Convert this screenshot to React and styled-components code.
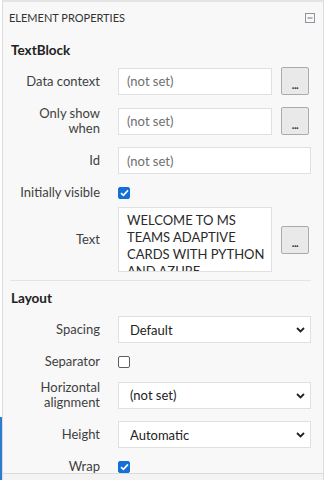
import React from "react";
import styled, { createGlobalStyle } from "styled-components";

const Global = createGlobalStyle`
  html, body { margin: 0; padding: 0; background: #ffffff; }
  body { font-family: Lato, "Segoe UI", "Liberation Sans", sans-serif; }
  * { box-sizing: border-box; }
`;

const Page = styled.div`
  display: flex;
  width: 327px;
  height: 480px;
  overflow: hidden;
  background: #ffffff;
`;

const Rail = styled.div`
  width: 2px;
  display: flex;
  flex-direction: column;
  justify-content: flex-end;
`;

const RailMark = styled.div`
  height: 63px;
  background: #2b7bd0;
`;

const Panel = styled.div`
  width: 322px;
  height: 480px;
  display: flex;
  flex-direction: column;
  background: #f8f8f8;
  border-left: 1px solid #dcdcdc;
  border-right: 1px solid #dcdcdc;
  border-top: 2px solid #e4e4e4;
`;

const Scroll = styled.div`
  height: 472px;
  overflow: hidden;
  border-bottom: 1px solid #dadada;
`;

const Footer = styled.div`
  flex: 1;
  background: #f3f3f3;
`;

const Header = styled.div`
  height: 31px;
  display: flex;
  align-items: center;
  justify-content: space-between;
  padding: 0 8px 0 6px;
  font-size: 11px;
  color: #333333;
  text-transform: uppercase;
`;

const Section = styled.div`
  border-bottom: ${(p) => (p.$divider ? "1px solid #e4e4e4" : "none")};
  margin: ${(p) => (p.$divider ? "0 12px 0 7px" : "0")};
  padding: ${(p) => (p.$divider ? "0 0 8px 1px" : "0 12px 8px 8px")};
`;

const SectionTitle = styled.div`
  font-size: 13.5px;
  font-weight: 700;
  line-height: 18px;
  color: #222222;
  margin: ${(p) => p.$top}px 0 ${(p) => p.$bottom}px 0;
`;

const Form = styled.div`
  display: grid;
  grid-template-columns: 89px 1fr;
  column-gap: 18px;
  row-gap: 11px;
  align-items: center;
`;

const Label = styled.div`
  justify-self: end;
  max-width: 84px;
  text-align: right;
  font-size: 13px;
  line-height: 15px;
  color: #3f3f3f;
  margin-top: ${(p) => p.$shift || 0}px;
`;

const ControlRow = styled.div`
  display: flex;
  align-items: center;
  gap: 9px;
  min-height: ${(p) => p.$h || 27}px;
  margin-top: ${(p) => p.$shift || 0}px;
`;

const TextInput = styled.input`
  width: ${(p) => (p.$narrow ? "154px" : "100%")};
  height: 27px;
  border: 1px solid #e0e0e0;
  background: #ffffff;
  padding: 0 8px;
  font-family: inherit;
  font-size: 13px;
  color: #222;
  outline: none;
  &::placeholder { color: #6e6e6e; opacity: 1; }
`;

const TextArea = styled.textarea`
  width: 154px;
  height: 65px;
  border: 1px solid #e0e0e0;
  background: #ffffff;
  padding: 4px 4px 0 8px;
  font-family: inherit;
  font-size: 13px;
  line-height: 17px;
  color: #2a2a2a;
  resize: none;
  overflow: hidden;
  outline: none;
`;

const DotsButton = styled.button`
  width: 28px;
  height: 28px;
  padding: 6px 0 0 0;
  border: 1px solid #ababab;
  border-radius: 2px;
  background: #e9e9e9;
  font-family: inherit;
  font-size: 11px;
  font-weight: 700;
  color: #333;
  line-height: 1;
  letter-spacing: -0.5px;
`;

const SelectWrap = styled.div`
  position: relative;
  width: 100%;
  height: 27px;
`;

const Select = styled.select`
  appearance: none;
  width: 100%;
  height: 27px;
  border: 1px solid #e0e0e0;
  background: #ffffff;
  padding: 0 24px 0 11px;
  font-family: inherit;
  font-size: 13px;
  color: #222222;
  outline: none;
`;

const Chevron = styled.svg`
  position: absolute;
  right: 6px;
  top: 11px;
  pointer-events: none;
`;

const Box = styled.span`
  display: inline-flex;
  align-items: center;
  justify-content: center;
  width: 12px;
  height: 12px;
  border-radius: 2px;
  background: ${(p) => (p.$on ? "#1470d6" : "#ffffff")};
  border: 1px solid ${(p) => (p.$on ? "#1470d6" : "#5e5e5e")};
`;

const CollapseIcon = () => (
  <svg width="10" height="10" viewBox="0 0 10 10">
    <rect x="0.5" y="0.5" width="9" height="9" fill="none" stroke="#8f949c" />
    <line x1="2.5" y1="5" x2="7.5" y2="5" stroke="#6f737a" />
  </svg>
);

const Check = ({ on }) => (
  <Box $on={on}>
    {on && (
      <svg width="9" height="8" viewBox="0 0 9 8">
        <path d="M1 4.2 L3.4 6.4 L8 1.4" fill="none" stroke="#ffffff" strokeWidth="1.6" />
      </svg>
    )}
  </Box>
);

const Dropdown = ({ value }) => (
  <SelectWrap>
    <Select defaultValue={value}>
      <option>{value}</option>
    </Select>
    <Chevron width="9" height="6" viewBox="0 0 9 6">
      <path d="M1 1 L4.5 4.4 L8 1" fill="none" stroke="#222" strokeWidth="1.8" />
    </Chevron>
  </SelectWrap>
);

export default function App() {
  return (
    <Page>
      <Global />
      <Rail>
        <RailMark />
      </Rail>
      <Panel>
        <Scroll>
          <Header>
            <span>Element Properties</span>
            <CollapseIcon />
          </Header>
          <Section $divider>
            <SectionTitle $top={8} $bottom={8}>TextBlock</SectionTitle>
            <Form>
              <Label>Data context</Label>
              <ControlRow>
                <TextInput $narrow placeholder="(not set)" />
                <DotsButton>...</DotsButton>
              </ControlRow>

              <Label>Only show when</Label>
              <ControlRow $h={30}>
                <TextInput $narrow placeholder="(not set)" />
                <DotsButton>...</DotsButton>
              </ControlRow>

              <Label>Id</Label>
              <ControlRow>
                <TextInput placeholder="(not set)" />
              </ControlRow>

              <Label>Initially visible</Label>
              <ControlRow $h={15}>
                <Check on />
              </ControlRow>

              <Label $shift={-4}>Text</Label>
              <ControlRow $h={65} $shift={-4}>
                <TextArea
                  readOnly
                  defaultValue="WELCOME TO MS TEAMS ADAPTIVE CARDS WITH PYTHON AND AZURE"
                />
                <DotsButton>...</DotsButton>
              </ControlRow>
            </Form>
          </Section>
          <Section>
            <SectionTitle $top={8} $bottom={9}>Layout</SectionTitle>
            <Form>
              <Label>Spacing</Label>
              <ControlRow>
                <Dropdown value="Default" />
              </ControlRow>

              <Label>Separator</Label>
              <ControlRow $h={15}>
                <Check on={false} />
              </ControlRow>

              <Label>Horizontal alignment</Label>
              <ControlRow $h={30}>
                <Dropdown value="(not set)" />
              </ControlRow>

              <Label>Height</Label>
              <ControlRow>
                <Dropdown value="Automatic" />
              </ControlRow>

              <Label>Wrap</Label>
              <ControlRow $h={15}>
                <Check on />
              </ControlRow>
            </Form>
          </Section>
        </Scroll>
        <Footer />
      </Panel>
    </Page>
  );
}
